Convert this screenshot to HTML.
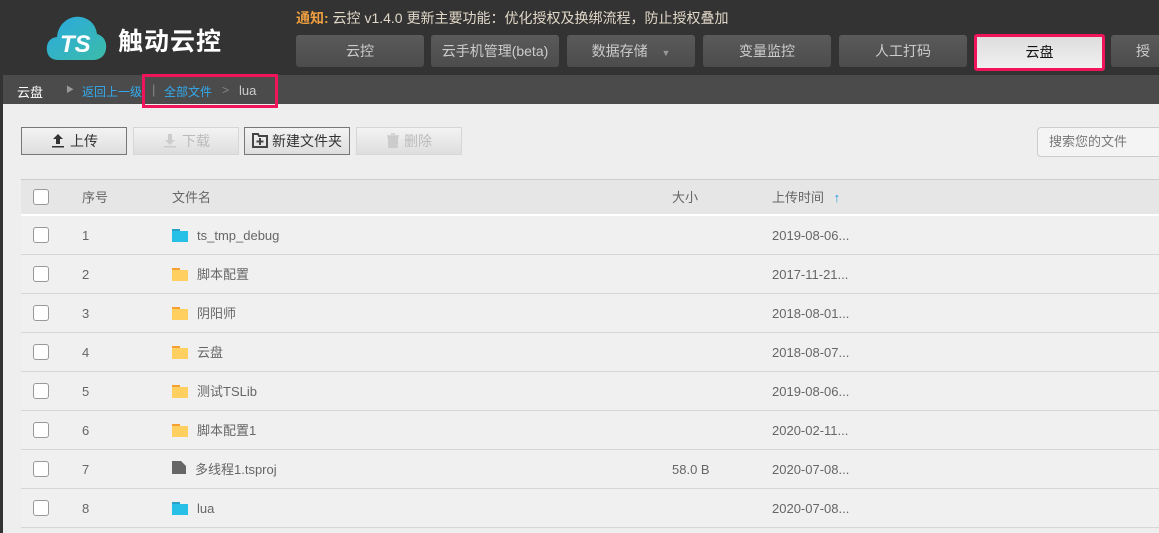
<!DOCTYPE html>
<html><head><meta charset="utf-8"><style>
*{margin:0;padding:0;box-sizing:border-box}
body{width:1159px;height:533px;overflow:hidden;background:#333;font-family:"Liberation Sans","Noto Sans CJK SC",sans-serif;font-size:13px;position:relative}
.abs{position:absolute}
.nav{position:absolute;top:35px;height:32px;background:linear-gradient(#5a5a5a,#4c4c4c);border-radius:3px;color:#ccc;font-size:14px;text-align:center;line-height:32px;width:128px}
.crumb{left:3px;top:75px;width:1156px;height:29px;background:#4b4b4b}
.main{left:3px;top:104px;width:1156px;height:429px;background:#eee}
.btn{position:absolute;top:127px;height:28px;width:106px;border:1px solid #aaa;background:linear-gradient(#f3f3f3,#dedede);font-size:14px;line-height:26px;text-align:center;color:#333}
.btn.dis{color:#bbb;border-color:#d6d6d6}
.btn svg{vertical-align:-2px;margin-right:4px}
.row{position:absolute;left:21px;width:1138px;height:39px;border-bottom:1px solid #d6d6d6;background:#f0f0f0;color:#666;font-size:13px}
.row span{position:absolute;top:0;line-height:39px}
.cb{position:absolute;left:12px;top:11px;width:16px;height:16px;border:1px solid #999;border-radius:3px;background:#fff}
.fold{position:absolute;left:151px;top:13px;width:16px;height:13px}
</style></head><body>
<svg class="abs" style="left:46px;top:13px" width="62" height="48" viewBox="0 0 62 48">
<defs><linearGradient id="g" x1="0" y1="0" x2="1" y2="1"><stop offset="0" stop-color="#2aa9e0"/><stop offset="1" stop-color="#3cbca8"/></linearGradient></defs>
<path d="M12 47 C3 47 0 40 1 33 C2 27 7 24 11 24 C12 11 23 2 35 4 C45 6 50 13 51 21 C58 23 61 29 60 36 C59 43 54 47 47 47 Z" fill="url(#g)"/>
<text x="14" y="39" font-family="Liberation Sans" font-weight="bold" font-size="24" fill="#fff" font-style="italic">TS</text>
</svg>
<div class="abs" style="left:118px;top:22px;color:#fff;font-size:25px;font-weight:bold;letter-spacing:1px">触动云控</div>
<div class="abs" style="left:296px;top:8px;color:#e0d7c7;font-size:14px"><b style="color:#f0a040">通知:</b> 云控 v1.4.0 更新主要功能：优化授权及换绑流程，防止授权叠加</div>
<div class="nav" style="left:296px">云控</div>
<div class="nav" style="left:431px">云手机管理(beta)</div>
<div class="nav" style="left:567px">数据存储 <span style="font-size:9px;color:#999;margin-left:10px">▼</span></div>
<div class="nav" style="left:703px">变量监控</div>
<div class="nav" style="left:839px">人工打码</div>
<div class="nav" style="left:974px;top:34px;width:131px;height:37px;background:linear-gradient(#ddd,#f0f0f0);border:3px solid #f0145a;color:#111;line-height:31px">云盘</div>
<div class="nav" style="left:1111px;text-align:left;padding-left:25px">授</div>
<div class="abs crumb"></div>
<div class="abs main"></div>
<div class="abs" style="left:17px;top:82px;color:#fff;font-size:13px">云盘</div>
<div class="abs" style="left:66px;top:84px;color:#999;font-size:8px">▶</div>
<div class="abs" style="left:82px;top:83px;color:#33aaee;font-size:12px">返回上一级</div>
<div class="abs" style="left:142px;top:74px;width:136px;height:34px;border:3px solid #f0145a"></div>
<div class="abs" style="left:152px;top:82px;color:#888;font-size:13px">|</div>
<div class="abs" style="left:164px;top:83px;color:#33aaee;font-size:12px">全部文件</div>
<div class="abs" style="left:222px;top:83px;color:#888;font-size:12px">&gt;</div>
<div class="abs" style="left:239px;top:83px;color:#ccc;font-size:13px">lua</div>
<div class="btn" style="left:21px;border-color:#777"><svg width="16" height="16"><path d="M8 2L3 7H6V12H10V7H13Z M2 14H14V15.5H2Z" fill="#333"/></svg>上传</div>
<div class="btn dis" style="left:133px"><svg width="16" height="16"><path d="M8 13L3 8H6V2H10V8H13Z M2 14H14V15.5H2Z" fill="#ccc"/></svg>下载</div>
<div class="btn" style="left:244px;border-color:#777"><svg width="16" height="15"><path d="M1 1H6L7 3H15V14H1Z" fill="none" stroke="#444" stroke-width="2"/><path d="M8 5V12M4.5 8.5H11.5" stroke="#444" stroke-width="2"/></svg>新建文件夹</div>
<div class="btn dis" style="left:356px"><svg width="14" height="15"><path d="M1 3H13M5 1H9M2.5 4H11.5L11 15H3Z" fill="#ccc" stroke="#ccc" stroke-width="1.5"/></svg>删除</div>
<div class="abs" style="left:1037px;top:127px;width:130px;height:30px;border:1px solid #ccc;border-radius:4px;background:#f4f4f4;color:#777;font-size:13px;line-height:28px;padding-left:11px">搜索您的文件</div>
<div class="row" style="top:179px;height:37px;background:#e6e6e6;border-top:1px solid #ccc;border-bottom:2px solid #fff"><div class="cb" style="top:9px"></div><span style="left:61px;line-height:35px">序号</span><span style="left:151px;line-height:35px">文件名</span><span style="left:651px;line-height:35px">大小</span><span style="left:751px;line-height:35px">上传时间 <b style="color:#1a9ae0;margin-left:6px">↑</b></span></div>
<div id="rows"></div>
<script>
var d=[["1","ts_tmp_debug","","2019-08-06...","b"],["2","脚本配置","","2017-11-21...","y"],["3","阴阳师","","2018-08-01...","y"],["4","云盘","","2018-08-07...","y"],["5","测试TSLib","","2019-08-06...","y"],["6","脚本配置1","","2020-02-11...","y"],["7","多线程1.tsproj","58.0 B","2020-07-08...","f"],["8","lua","","2020-07-08...","b"]];
var h="";d.forEach(function(r,i){var ic;
if(r[4]=="f")ic='<svg class="fold" style="left:151px;top:11px" width="14" height="17"><path d="M0 0H9L14 5V17H0Z" fill="#666"/></svg>';
else{var c=r[4]=="b"?["#2aa0c8","#29c0e8"]:["#f5a030","#ffd060"];ic='<svg class="fold" width="18" height="14"><rect x="0" y="0" width="8" height="3" fill="'+c[0]+'"/><rect x="0" y="2" width="16" height="12" fill="'+c[1]+'"/></svg>';}
h+='<div class="row" style="top:'+(216+i*39)+'px"><div class="cb"></div><span style="left:61px">'+r[0]+'</span>'+ic+'<span style="left:'+(r[4]=="f"?174:176)+'px">'+r[1]+'</span><span style="left:651px">'+r[2]+'</span><span style="left:751px">'+r[3]+'</span></div>';});
document.getElementById("rows").innerHTML=h;
</script>
</body></html>
